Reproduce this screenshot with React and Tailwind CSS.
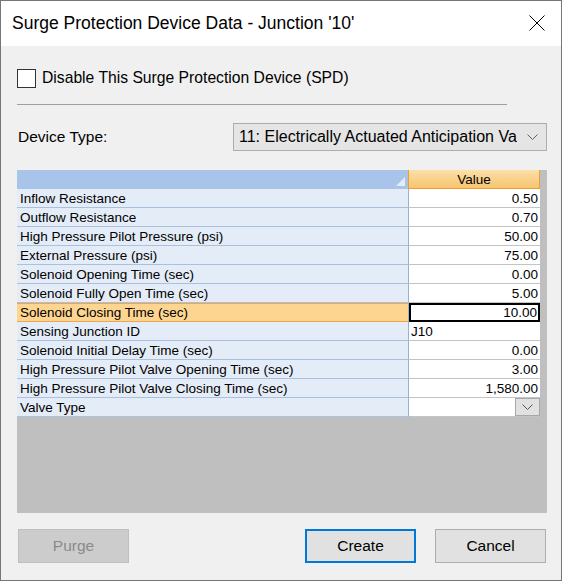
import React from 'react';

const rows = [
    { label: 'Inflow Resistance', value: '0.50' },
    { label: 'Outflow Resistance', value: '0.70' },
    { label: 'High Pressure Pilot Pressure (psi)', value: '50.00' },
    { label: 'External Pressure (psi)', value: '75.00' },
    { label: 'Solenoid Opening Time (sec)', value: '0.00' },
    { label: 'Solenoid Fully Open Time (sec)', value: '5.00' },
    { label: 'Solenoid Closing Time (sec)', value: '10.00', selected: true },
    { label: 'Sensing Junction ID', value: 'J10', left: true },
    { label: 'Solenoid Initial Delay Time (sec)', value: '0.00' },
    { label: 'High Pressure Pilot Valve Opening Time (sec)', value: '3.00' },
    { label: 'High Pressure Pilot Valve Closing Time (sec)', value: '1,580.00' },
    { label: 'Valve Type', value: '', dropdown: true },
];

const Chevron = ({ className }) => (
    <svg width="11" height="6" viewBox="0 0 11 6" className={className}>
        <polyline points="0.5,0.5 5.5,5.5 10.5,0.5" fill="none" stroke="currentColor" strokeWidth="1" />
    </svg>
);

const GridRow = ({ row }) => {
    const labelCls = row.selected
        ? 'bg-[#fed590] border-b border-[#f3a446] shadow-[inset_0_1px_0_#f3a446]'
        : 'bg-[#e4ecf7] border-b border-[#a9c0de]';
    return (
        <div className="flex h-[19px]">
            <div className={`w-[392px] h-[19px] box-border border-r border-r-[#94b2d8] pl-[3px] text-[13.5px] leading-[20px] text-black whitespace-nowrap overflow-hidden ${labelCls}`}>
                {row.label}
            </div>
            {row.selected ? (
                <div className="w-[131px] h-[19px] box-border bg-white border-2 border-black pr-[1px] text-right text-[13.5px] leading-[16px] text-black">
                    {row.value}
                </div>
            ) : (
                <div className={`relative w-[131px] h-[19px] box-border bg-white border-b border-[#c4c4c4] text-[13.5px] leading-[20px] text-black ${row.left ? 'pl-[2px] text-left' : 'pr-[2px] text-right'}`}>
                    {row.value}
                    {row.dropdown && (
                        <div className="absolute right-0 top-0 w-[25px] h-[18px] bg-[#e1e1e1] border border-[#a8a8a8] flex items-center justify-center text-[#555]">
                            <Chevron />
                        </div>
                    )}
                </div>
            )}
        </div>
    );
};

export default function App() {
    return (
        <div className="w-[562px] h-[581px] box-border border border-[#767676] bg-[#f0f0f0] flex flex-col font-['Liberation_Sans',Arial,sans-serif] text-black">
            <div className="h-[45px] bg-white flex items-center justify-between pl-[11px] pr-[16px]">
                <span className="text-[17.5px] leading-none">Surge Protection Device Data - Junction '10'</span>
                <svg width="16" height="16" viewBox="0 0 16 16" className="mt-[-2px]">
                    <line x1="0.5" y1="0.5" x2="15.5" y2="15.5" stroke="#000" strokeWidth="1" />
                    <line x1="15.5" y1="0.5" x2="0.5" y2="15.5" stroke="#000" strokeWidth="1" />
                </svg>
            </div>

            <div className="flex-1 flex flex-col pl-[16px] pr-[14px]">
                <label className="mt-[22px] flex items-center h-[20px]">
                    <span className="w-[19px] h-[19px] box-border bg-white border border-[#333]" />
                    <span className="ml-[6px] text-[15.7px]">Disable This Surge Protection Device (SPD)</span>
                </label>

                <div className="mt-[16px] h-px w-[490px] bg-[#a0a0a0]" />

                <div className="mt-[18px] flex items-center justify-between h-[28px]">
                    <span className="ml-[1px] text-[15.5px]">Device Type:</span>
                    <div className="w-[314px] h-[28px] box-border bg-[#e5e5e5] border border-[#adadad] flex items-center justify-between pl-[5px] pr-[8px]">
                        <span className="text-[16px] whitespace-nowrap overflow-hidden">11: Electrically Actuated Anticipation Va</span>
                        <Chevron className="text-[#606060] ml-[6px] shrink-0" />
                    </div>
                </div>

                <div className="mt-[19px] w-[530px] h-[343px] bg-[#bfbfbf] flex flex-col">
                    <div className="flex h-[19px]">
                        <div className="relative w-[391px] h-[19px] bg-[#a9c4e9]">
                            <svg width="9" height="9" viewBox="0 0 9 9" className="absolute right-[3px] bottom-[3px]">
                                <polygon points="9,0 9,9 0,9" fill="#e4ecf7" />
                            </svg>
                        </div>
                        <div className="w-[132px] h-[19px] box-border border-l border-r border-b border-[#f29b35] bg-gradient-to-b from-[#fbe0a8] to-[#f6c46e] text-center text-[13.5px] leading-[19px]">
                            Value
                        </div>
                    </div>
                    {rows.map((row) => (
                        <GridRow key={row.label} row={row} />
                    ))}
                </div>

                <div className="mt-[16px] flex items-center h-[34px] ml-[1px] mr-[1px]">
                    <button className="w-[111px] h-[34px] box-border bg-[#cccccc] border border-[#bfbfbf] text-[15.5px] text-[#8a8a8a]">Purge</button>
                    <button className="ml-auto w-[111px] h-[34px] box-border bg-[#e1e1e1] border-2 border-[#0078d7] text-[15.5px]">Create</button>
                    <button className="ml-[19px] w-[111px] h-[34px] box-border bg-[#e1e1e1] border border-[#adadad] text-[15.5px]">Cancel</button>
                </div>
            </div>
        </div>
    );
}
